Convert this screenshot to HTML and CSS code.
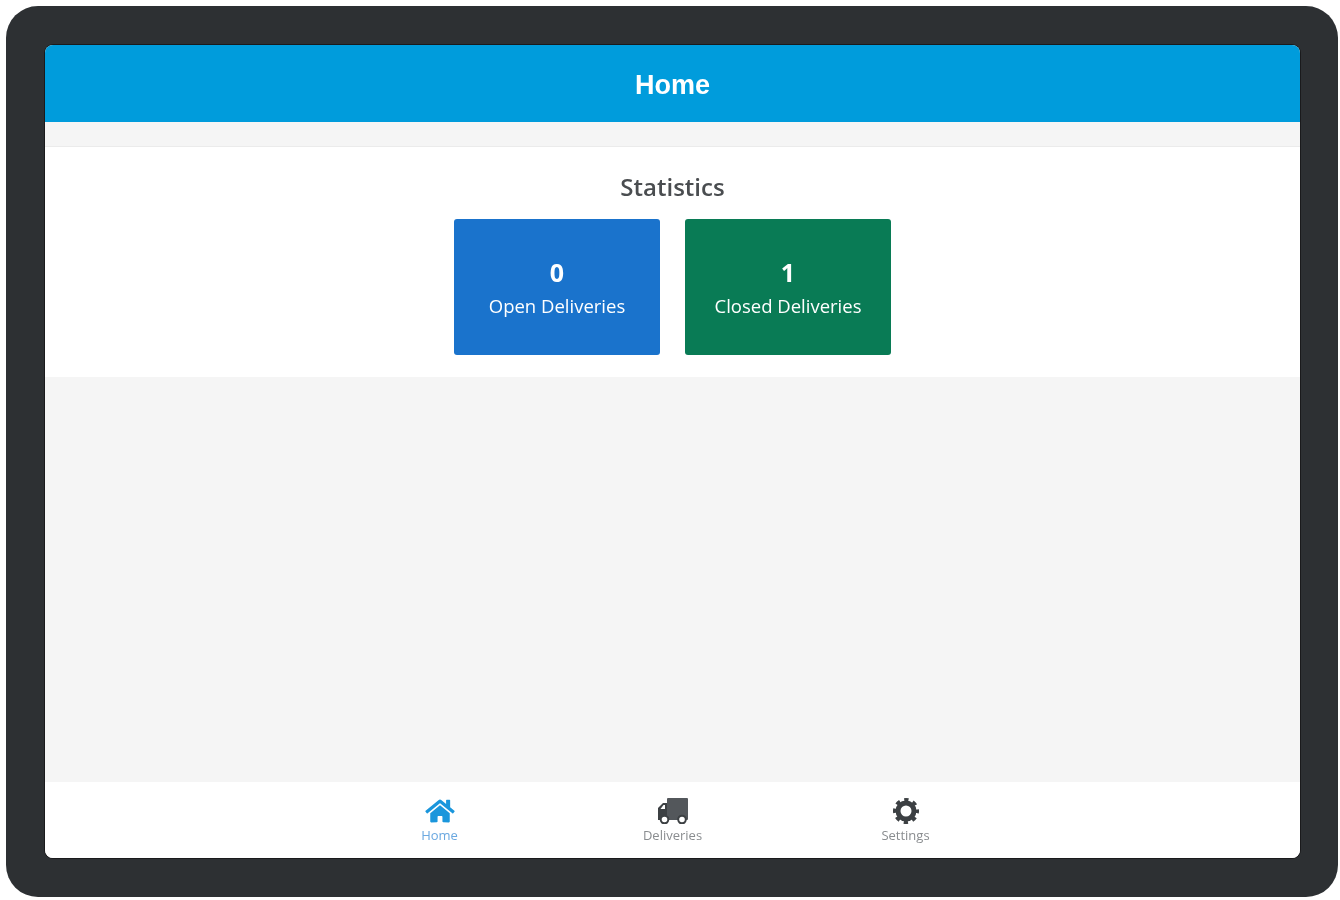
FILE: index.html
```html
<!DOCTYPE html>
<html lang="en">
<head>
<meta charset="utf-8">
<title>Home</title>
<link rel="stylesheet" href="styles.css">
</head>
<body>
<div class="tablet">
  <div class="screen">
    <header class="topbar"><h1 class="topbar-title">Home</h1></header>
    <main class="content">
      <section class="stats">
        <h2 class="stats-title">Statistics</h2>
        <div class="stats-cards">
          <div class="stat-card stat-open">
            <div class="stat-value">0</div>
            <div class="stat-label">Open Deliveries</div>
          </div>
          <div class="stat-card stat-closed">
            <div class="stat-value">1</div>
            <div class="stat-label">Closed Deliveries</div>
          </div>
        </div>
      </section>
    </main>
    <nav class="tabbar">
      <div class="tab tab-active">
        <svg class="tab-icon" viewBox="0 0 576 512" aria-hidden="true"><path fill="currentColor" d="M280.37 148.26L96 300.11V464a16 16 0 0 0 16 16l112.06-.29a16 16 0 0 0 15.92-16V368a16 16 0 0 1 16-16h64a16 16 0 0 1 16 16v95.64a16 16 0 0 0 16 16.05L464 480a16 16 0 0 0 16-16V300L295.67 148.26a12.19 12.19 0 0 0-15.3 0zM571.6 251.47L488 182.56V44.05a12 12 0 0 0-12-12h-56a12 12 0 0 0-12 12v72.61L318.47 43a48 48 0 0 0-61 0L4.34 251.47a12 12 0 0 0-1.6 16.9l25.5 31A12 12 0 0 0 45.15 301l235.22-193.74a12.19 12.19 0 0 1 15.3 0L530.9 301a12 12 0 0 0 16.9-1.6l25.5-31a12 12 0 0 0-1.7-16.93z"/></svg>
        <span class="tab-label">Home</span>
      </div>
      <div class="tab">
        <svg class="tab-icon" viewBox="0 0 30 26" aria-hidden="true">
          <rect class="truck-box" x="9" y="0" width="21" height="22" rx="1"/>
          <path fill="currentColor" d="M9 5H5L0 10v12h9z"/>
          <path fill="#fff" d="M5.5 7H7v4H2.5z"/>
          <circle cx="6.5" cy="21.5" r="3.8" fill="#fff" stroke="currentColor" stroke-width="2"/>
          <circle cx="24" cy="21.5" r="3.8" fill="#fff" stroke="currentColor" stroke-width="2"/>
        </svg>
        <span class="tab-label">Deliveries</span>
      </div>
      <div class="tab">
        <svg class="tab-icon" viewBox="0 0 26 26" aria-hidden="true">
          <circle cx="13" cy="13" r="8" fill="none" stroke="currentColor" stroke-width="5"/>
          <circle cx="13" cy="13" r="11.2" fill="none" stroke="currentColor" stroke-width="3.6" stroke-dasharray="4.3 4.5" stroke-dashoffset="2.15"/>
        </svg>
        <span class="tab-label">Settings</span>
      </div>
    </nav>
  </div>
</div>
</body>
</html>
```
FILE: styles.css
```css
* { box-sizing: border-box; }
html, body { margin: 0; padding: 0; background: #fff; }
body { padding: 6px 2px 3px 6px; height: 900px; overflow: hidden; font-family: "Open Sans", "Liberation Sans", sans-serif; }

.tablet {
  width: 1332px;
  height: 891px;
  padding: 39px 38px 39px 39px;
  background: #2d3033;
  border-radius: 32px;
  filter: blur(0.5px);
}
.screen {
  display: flex;
  flex-direction: column;
  width: 1255px;
  height: 813px;
  overflow: hidden;
  border-radius: 8px;
  background: #f5f5f5;
  box-shadow: 0 0 0 1px #1a1a1c;
}

.topbar {
  flex: 0 0 77px;
  display: flex;
  align-items: center;
  justify-content: center;
  background: #009cdc;
}
.topbar-title {
  margin: 3px 0 0;
  font-family: "Liberation Sans", Arial, sans-serif;
  font-size: 27px;
  font-weight: 700;
  color: #fff;
}

.content { flex: 1; padding-top: 24px; }
.stats {
  height: 231px;
  padding-top: 25px;
  background: #fff;
  border-top: 1px solid #ebebeb;
}
.stats-title {
  margin: 0 0 17px;
  height: 30px;
  line-height: 30px;
  font-size: 24px;
  font-weight: 600;
  text-align: center;
  color: #4a4d50;
}
.stats-cards { display: flex; justify-content: center; gap: 25px; }
.stat-card {
  width: 206px;
  height: 136px;
  padding-top: 36px;
  border-radius: 3px;
  text-align: center;
  color: #fff;
}
.stat-open { background: #1a73cc; }
.stat-closed { background: #097b55; }
.stat-value { height: 34px; line-height: 34px; font-size: 25px; font-weight: 700; }
.stat-label { height: 34px; line-height: 34px; font-size: 18.5px; }

.tabbar {
  flex: 0 0 76px;
  display: flex;
  justify-content: center;
  background: #fff;
}
.tab {
  width: 233px;
  padding-top: 16px;
  display: flex;
  flex-direction: column;
  align-items: center;
  color: #3c4043;
}
.tab-active { color: #1a96dc; }
.tab-icon { width: 30px; height: 26px; display: block; }
.truck-box { fill: #53575b; }
.tab-label { margin-top: 3px; line-height: 16px; font-size: 13px; color: #8a8d90; }
.tab-active .tab-label { color: #6aa8e0; }
```
